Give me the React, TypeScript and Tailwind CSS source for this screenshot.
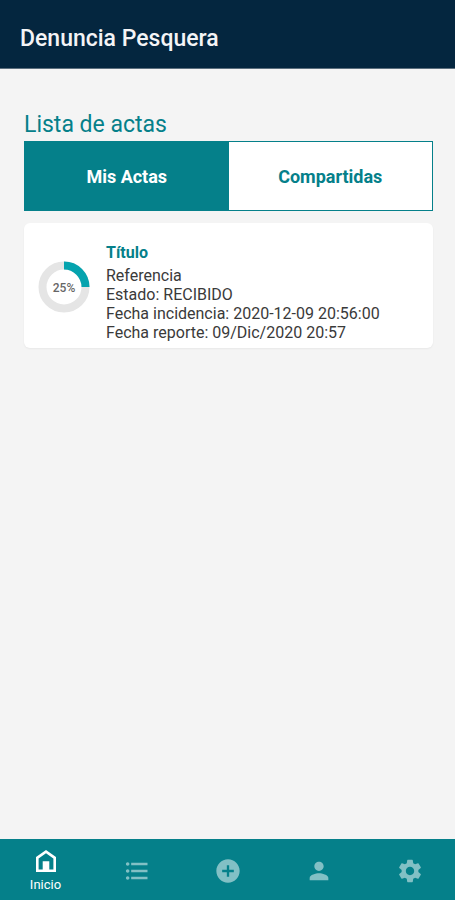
import { FunctionComponent, ReactNode, useState } from "react";
import {
  MdAddCircle,
  MdFormatListBulleted,
  MdPerson,
  MdSettings,
} from "react-icons/md";

const HomeIcon: FunctionComponent = () => (
  <svg className="size-7" viewBox="0 0 28 28" aria-hidden="true">
    <path
      d="M4 25V10L14 3l10 7v15H4Zm2.6-2.6h4.1v-8.2h6.6v8.2h4.1V11.4L14 6.2l-7.4 5.2v11Z"
      fill="currentColor"
    />
  </svg>
);

const Progress: FunctionComponent<{ value: number }> = ({ value }) => (
  <svg
    className="size-[52px] shrink-0"
    viewBox="0 0 52 52"
    role="img"
    aria-label={`${value}%`}
  >
    <circle cx="26" cy="26" r="21.5" fill="none" stroke="#e5e5e5" strokeWidth="8" />
    <circle
      cx="26"
      cy="26"
      r="21.5"
      fill="none"
      stroke="#05a3ae"
      strokeWidth="8"
      pathLength="100"
      strokeDasharray={`${value} 100`}
      transform="rotate(-90 26 26)"
    />
    <text
      x="26"
      y="31"
      textAnchor="middle"
      className="fill-[#666666] text-[12px] font-medium"
    >
      {value}%
    </text>
  </svg>
);

const tabs = ["Mis Actas", "Compartidas"];

const navItems: { label: string; icon: ReactNode }[] = [
  { label: "Inicio", icon: <HomeIcon /> },
  { label: "Lista", icon: <MdFormatListBulleted className="size-7" /> },
  { label: "Agregar", icon: <MdAddCircle className="size-7" /> },
  { label: "Perfil", icon: <MdPerson className="size-7" /> },
  { label: "Ajustes", icon: <MdSettings className="size-7" /> },
];

const App: FunctionComponent = () => {
  const [tab, setTab] = useState("Mis Actas");
  const [page, setPage] = useState("Inicio");

  return (
    <div className="flex min-h-screen flex-col bg-[#f4f4f4] font-[Roboto,sans-serif] text-[#3a3a3a]">
      <header className="border-b border-[#5c6f7e] bg-[#04263f] px-5 pt-[23px] pb-[13px]">
        <h1 className="text-[23px] leading-8 font-medium text-[#f4f4f6]">
          Denuncia Pesquera
        </h1>
      </header>

      <main className="flex-1 px-6 pt-10 pr-[22px]">
        <h2 className="text-[23px] leading-8 text-[#05808a]">
          Lista de actas
        </h2>
        <div className="flex h-[70px] border border-[#05808a] bg-white">
          {tabs.map((name) => (
            <button
              key={name}
              type="button"
              onClick={() => setTab(name)}
              className={
                name === tab
                  ? "flex-1 bg-[#05808a] text-[18px] font-bold text-white"
                  : "flex-1 text-[18px] font-bold text-[#05808a]"
              }
            >
              {name}
            </button>
          ))}
        </div>

        <article className="mt-3 flex items-center gap-4 rounded-md bg-white px-3.5 pt-5 pb-1.5 shadow-xs">
          <div className="pb-3">
            <Progress value={25} />
          </div>
          <div className="text-[16px] leading-[19px]">
            <h3 className="mb-1 font-bold text-[#05808a]">Título</h3>
            <p>Referencia</p>
            <p>Estado: RECIBIDO</p>
            <p>Fecha incidencia: 2020-12-09 20:56:00</p>
            <p>Fecha reporte: 09/Dic/2020 20:57</p>
          </div>
        </article>
      </main>

      <nav className="flex h-[61px] bg-[#05808a] pt-[3px]">
        {navItems.map(({ label, icon }) => (
          <button
            key={label}
            type="button"
            aria-label={label}
            onClick={() => setPage(label)}
            className={
              label === page
                ? "flex flex-1 flex-col items-center justify-center text-white"
                : "flex flex-1 flex-col items-center justify-center text-[#82c0c5]"
            }
          >
            {icon}
            {label === page && (
              <span className="text-[13px] leading-5">{label}</span>
            )}
          </button>
        ))}
      </nav>
    </div>
  );
};

export default App;
